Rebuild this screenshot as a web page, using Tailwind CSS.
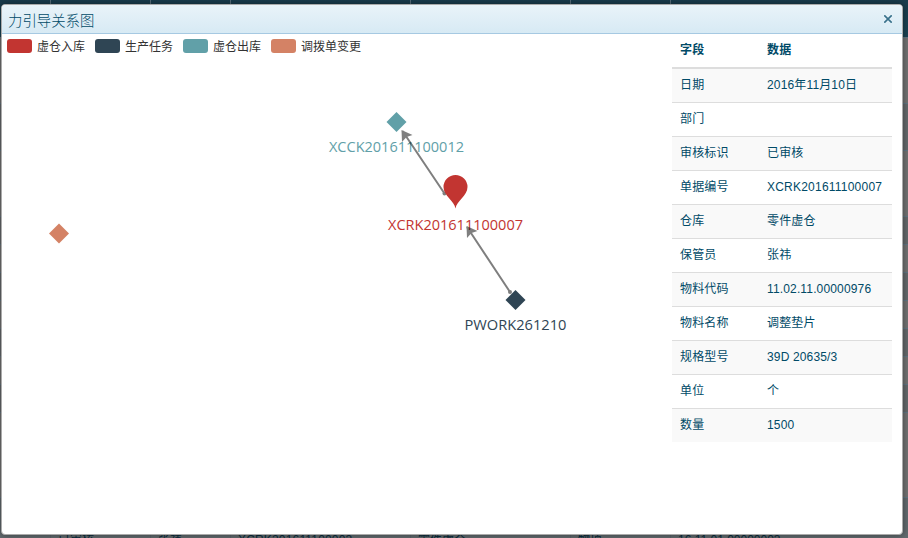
<!DOCTYPE html>
<html lang="zh-CN">
<head>
<meta charset="utf-8">
<title>力引导关系图</title>
<script src="https://cdn.jsdelivr.net/npm/@tailwindcss/browser@4"></script>
</head>
<body class="relative h-[538px] w-[908px] overflow-hidden bg-[#65696b] font-['Liberation_Sans','Noto_Sans_CJK_SC',sans-serif] text-xs text-[#00405f]">
<!-- Dimmed list behind the dialog -->
<div class="flex h-[538px] flex-col overflow-hidden">
  <div class="grid h-[37px] shrink-0 grid-cols-[51px_100px_80px_180px_160px_100px_1fr] divide-x divide-[#566b78] bg-gradient-to-b from-[#193b4c] to-[#1b4353]">
    <div></div><div></div><div></div><div></div><div></div><div></div><div></div>
  </div>
  <div class="h-[67px] shrink-0 border-y border-[#607583] bg-[#727272]"></div>
  <div class="h-[47px] shrink-0 border-b border-[#607583] bg-[#65696b]"></div>
  <div class="h-[66px] shrink-0 border-b border-[#607583] bg-[#727272]"></div>
  <div class="h-7 shrink-0 border-b border-[#607583] bg-[#65696b]"></div>
  <div class="h-7 shrink-0 border-b border-[#607583] bg-[#727272]"></div>
  <div class="h-7 shrink-0 border-b border-[#607583] bg-[#65696b]"></div>
  <div class="h-7 shrink-0 border-b border-[#607583] bg-[#727272]"></div>
  <div class="h-7 shrink-0 border-b border-[#607583] bg-[#65696b]"></div>
  <div class="h-7 shrink-0 border-b border-[#607583] bg-[#727272]"></div>
  <div class="h-7 shrink-0 border-b border-[#607583] bg-[#65696b]"></div>
  <div class="h-[85px] shrink-0 border-b border-[#607583] bg-[#727272]"></div>
  <div class="grid h-11 shrink-0 grid-cols-[51px_100px_80px_180px_160px_100px_1fr] divide-x divide-[#596369] bg-[#626a6e] pt-[33px] leading-[18px] text-[#092b3b]">
    <div></div><div class="pl-[7px]">已审核</div><div class="pl-[7px]">张祎</div><div class="pl-[7px] tracking-[0.17px]">XCRK201611100003</div><div class="pl-[7px]">零件虚仓</div><div class="pl-[7px]">物项</div><div class="pl-[7px]">16.11.01.00000003</div>
  </div>
</div>

<!-- Relation dialog -->
<div class="absolute top-1 left-px flex h-[531px] w-[902px] flex-col overflow-hidden rounded-[4px] border border-[#aaaaaa] bg-white shadow-[0_0_6px_rgba(0,0,0,0.45)]">
  <div class="flex h-[29px] shrink-0 items-center justify-between border-b border-[#a6c9e2] bg-gradient-to-b from-[#e9f3f9] to-[#d7eaf4] pr-[10px] pl-[6px]">
    <h1 class="pt-1 text-[14.4px] leading-5 font-light text-[#004a67]">力引导关系图</h1>
    <svg class="h-2 w-2" viewBox="0 0 8 8" fill="none" stroke="#39718b" stroke-width="1.6"><path d="M.3 .3L7.7 7.700M7.700 .3L.3 7.700"/></svg>
  </div>
  <div class="flex min-h-0 flex-1">
    <div class="flex w-[670px] flex-col">
      <ul class="flex h-6 shrink-0 items-center gap-[10px] pl-[5px] leading-4 text-[#333]">
        <li class="flex items-center gap-[5px]"><span class="h-[14px] w-[25px] rounded-[3px] bg-[#c23531]"></span><span class="pt-0.5">虚仓入库</span></li>
        <li class="flex items-center gap-[5px]"><span class="h-[14px] w-[25px] rounded-[3px] bg-[#2f4554]"></span><span class="pt-0.5">生产任务</span></li>
        <li class="flex items-center gap-[5px]"><span class="h-[14px] w-[25px] rounded-[3px] bg-[#61a0a8]"></span><span class="pt-0.5">虚仓出库</span></li>
        <li class="flex items-center gap-[5px]"><span class="h-[14px] w-[25px] rounded-[3px] bg-[#d48265]"></span><span class="pt-0.5">调拨单变更</span></li>
      </ul>
      <svg class="h-[442px] w-[670px] shrink-0 font-['Open_Sans','Noto_Sans',sans-serif] text-[14.5px]" viewBox="2 58 670 442">
        <path d="M396.5 112l10 10-10 10-10-10z" fill="#61a0a8"/>
        <path d="M515.5 290l10 10-10 10-10-10z" fill="#2f4554"/>
        <path d="M59 223.500l10 10-10 10-10-10z" fill="#d48265"/>
        <g text-anchor="middle">
          <text x="396.5" y="152" textLength="135" lengthAdjust="spacingAndGlyphs" fill="#61a0a8">XCCK201611100012</text>
          <text x="455.5" y="230" textLength="135" lengthAdjust="spacingAndGlyphs" fill="#c23531">XCRK201611100007</text>
          <text x="515.5" y="330" textLength="102" lengthAdjust="spacingAndGlyphs" fill="#2f4554">PWORK261210</text>
        </g>
        <g fill="#000" stroke="#000" opacity="0.5">
          <path d="M402.500 131L444.500 193.500M467 227L510 292" stroke-width="2" fill="none"/>
          <path d="M401.500 130l11 5-6 2-4.500 5zM466.500 226l11 5-6 2-4.500 5z" stroke="none"/>
          <circle cx="444.500" cy="193.500" r="2" stroke="none"/>
          <circle cx="510" cy="292" r="2" stroke="none"/>
        </g>
        <path d="M455.500 208.500C454.500 201 443.500 196 443.500 187A12 12 0 0 1 467.500 187C467.500 196 456.500 201 455.500 208.500z" fill="#c23531"/>
      </svg>
    </div>
    <table class="w-[220px] table-fixed self-start text-left leading-[17px] tracking-[0.15px] text-[#004a67]">
      <thead><tr class="h-[34px] border-b-2 border-[#ddd] align-top"><th class="w-[87px] px-2 pt-2 pb-0 font-bold">字段</th><th class="px-2 pt-2 pb-0 font-bold">数据</th></tr></thead>
      <tbody class="divide-y divide-[#ddd]">
        <tr class="h-[34px] bg-[#f9f9f9]"><td class="px-2">日期</td><td class="px-2">2016年11月10日</td></tr>
        <tr class="h-[34px]"><td class="px-2">部门</td><td class="px-2"></td></tr>
        <tr class="h-[34px] bg-[#f9f9f9]"><td class="px-2">审核标识</td><td class="px-2">已审核</td></tr>
        <tr class="h-[34px]"><td class="px-2">单据编号</td><td class="px-2 tracking-[0.22px]">XCRK201611100007</td></tr>
        <tr class="h-[34px] bg-[#f9f9f9]"><td class="px-2">仓库</td><td class="px-2">零件虚仓</td></tr>
        <tr class="h-[34px]"><td class="px-2">保管员</td><td class="px-2">张祎</td></tr>
        <tr class="h-[34px] bg-[#f9f9f9]"><td class="px-2">物料代码</td><td class="px-2">11.02.11.00000976</td></tr>
        <tr class="h-[34px]"><td class="px-2">物料名称</td><td class="px-2">调整垫片</td></tr>
        <tr class="h-[34px] bg-[#f9f9f9]"><td class="px-2">规格型号</td><td class="px-2">39D 20635/3</td></tr>
        <tr class="h-[34px]"><td class="px-2">单位</td><td class="px-2">个</td></tr>
        <tr class="h-[34px] bg-[#f9f9f9]"><td class="px-2">数量</td><td class="px-2">1500</td></tr>
      </tbody>
    </table>
  </div>
</div>
</body>
</html>
